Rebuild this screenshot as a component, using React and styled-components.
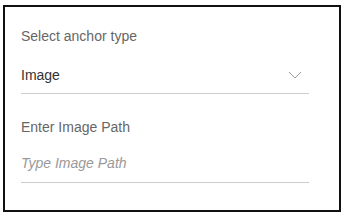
import React from "react";
import styled, { createGlobalStyle } from "styled-components";

const Global = createGlobalStyle`
  html, body { margin: 0; padding: 0; background: #fff; }
  body { font-family: "Liberation Sans", Arial, sans-serif; }
`;

const Page = styled.div`
  padding: 5px 8px 4px 3px;
`;

const Card = styled.div`
  box-sizing: border-box;
  width: 338px;
  height: 207px;
  border: 2px solid #111;
  padding: 21px 30px 0 16px;
  display: flex;
  flex-direction: column;
`;

const Label = styled.div`
  font-size: 14px;
  line-height: 16px;
  color: #666;
  margin-top: ${(p) => p.$mt || 0}px;
`;

const SelectRow = styled.div`
  display: flex;
  align-items: center;
  justify-content: space-between;
  margin-top: 23px;
  padding: 0 7px 10px 0;
  border-bottom: 1px solid #ccc;
`;

const Value = styled.span`
  font-size: 14px;
  line-height: 16px;
  color: #333;
`;

const Input = styled.input`
  all: unset;
  display: block;
  margin-top: 20px;
  padding-bottom: 11px;
  border-bottom: 1px solid #ccc;
  font-family: "Liberation Sans", Arial, sans-serif;
  font-size: 14px;
  line-height: 16px;
  height: 16px;
  color: #333;
  &::placeholder {
    color: #999;
    font-style: italic;
  }
`;

const Chevron = () => (
  <svg width="14" height="8" viewBox="0 0 14 8" fill="none">
    <path d="M1 1 L7 7 L13 1" stroke="#999" strokeWidth="1" />
  </svg>
);

export default function App() {
  return (
    <>
      <Global />
      <Page>
        <Card>
          <Label>Select anchor type</Label>
          <SelectRow>
            <Value>Image</Value>
            <Chevron />
          </SelectRow>
          <Label $mt={25}>Enter Image Path</Label>
          <Input placeholder="Type Image Path" />
        </Card>
      </Page>
    </>
  );
}
